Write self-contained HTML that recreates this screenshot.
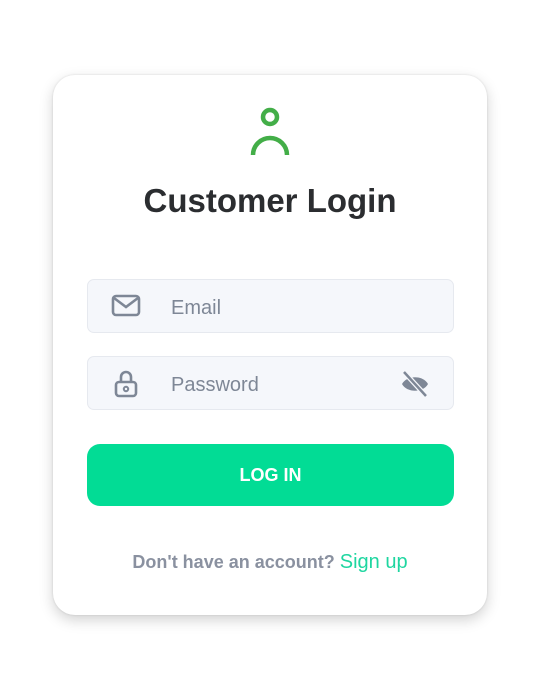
<!DOCTYPE html>
<html><head><meta charset="utf-8"><style>
*{margin:0;padding:0;box-sizing:border-box}
body{width:540px;height:675px;background:#fff;font-family:"Liberation Sans",sans-serif;position:relative;overflow:hidden}
.card{position:absolute;left:53px;top:75px;width:434px;height:540px;border-radius:22px;background:#fff;box-shadow:0 5px 14px rgba(0,0,0,0.18),0 0 2px rgba(0,0,0,0.12)}
.title{position:absolute;left:0;right:0;top:182px;text-align:center;font-size:33px;font-weight:bold;color:#2b2d30}
.inp{position:absolute;left:87px;width:367px;height:54px;background:#f5f7fb;border:1px solid #e6e9ef;border-radius:7px}
.inp span{position:absolute;left:83px;top:17px;font-size:20px;color:#7e8796}
.btn{position:absolute;left:87px;top:444px;width:367px;height:62px;background:#02dc95;border-radius:13px;color:#fff;font-weight:bold;font-size:18px;text-align:center;line-height:62px}
.foot{position:absolute;left:0;right:0;top:551px;text-align:center;font-size:18px;color:#8a91a0;font-weight:bold}
.foot a{color:#1ed6a0;font-weight:normal;font-size:20px;text-decoration:none}
svg{position:absolute}
</style></head><body>
<div class="card"></div>
<svg style="left:248px;top:106px" width="44" height="52" viewBox="0 0 44 52"><circle cx="22" cy="11" r="7" fill="none" stroke="#43ae48" stroke-width="4.5"/><path d="M5 49 A17 17 0 0 1 39 49" fill="none" stroke="#43ae48" stroke-width="4.5"/></svg>
<div class="title">Customer Login</div>
<div class="inp" style="top:279px"><span>Email</span></div>
<svg style="left:111px;top:294px" width="30" height="24" viewBox="0 0 30 24"><rect x="2" y="2" width="26" height="19" rx="3" fill="none" stroke="#7e8796" stroke-width="2.6"/><path d="M3 4 L15 13 L27 4" fill="none" stroke="#7e8796" stroke-width="2.6"/></svg>
<div class="inp" style="top:356px"><span>Password</span></div>
<svg style="left:114px;top:370px" width="24" height="28" viewBox="0 0 24 28"><path d="M7 12 V7 a5 5 0 0 1 10 0 V12" fill="none" stroke="#7e8796" stroke-width="2.6"/><rect x="2" y="12" width="20" height="14" rx="3" fill="none" stroke="#7e8796" stroke-width="2.6"/><circle cx="12" cy="19" r="2.2" fill="none" stroke="#7e8796" stroke-width="2"/></svg>
<svg style="left:400px;top:370px" width="30" height="28" viewBox="0 0 30 28"><path d="M2 14 C7 5 23 5 28 14 C23 23 7 23 2 14Z" fill="#7e8796"/><path d="M4 2 L26 26" stroke="#f5f7fb" stroke-width="5"/><path d="M4 2 L26 26" stroke="#7e8796" stroke-width="2.5"/></svg>
<div class="btn">LOG IN</div>
<div class="foot">Don't have an account? <a>Sign up</a></div>
</body></html>
